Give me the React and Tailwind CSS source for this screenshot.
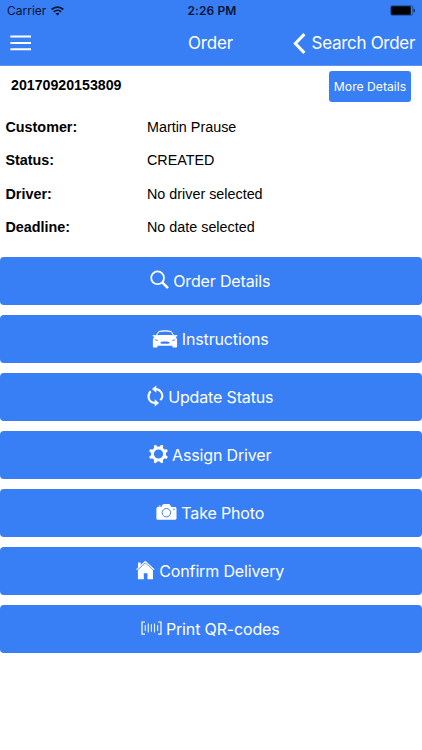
import React from 'react';

const SearchIcon = () => (
  <svg width="19" height="20" viewBox="0 0 19 20" className="shrink-0 -mt-0.5" fill="none" stroke="#fff">
    <circle cx="7.6" cy="7.8" r="6.4" strokeWidth="1.8" />
    <path d="M12.2 12.4 L18 18.1" strokeWidth="2.6" />
  </svg>
);

const CarIcon = () => (
  <svg width="26" height="20" viewBox="0 0 26 20" className="shrink-0 -mt-px" fill="#fff">
    <path fillRule="evenodd" d="M7 2 C10 .9 16 .9 19 2 C20.3 3.1 21.3 4.9 22 6.3 L25.3 5.9 L25.2 7.2 L23.6 7.8 C24.8 8.9 25.2 10.4 25.1 12 V17.6 C25.1 18.3 24.8 18.6 24.2 18.6 H21.3 C20.7 18.6 20.4 18.3 20.4 17.6 V16.8 H5.6 V17.6 C5.6 18.3 5.3 18.6 4.7 18.6 H1.8 C1.2 18.6 .9 18.3 .9 17.6 V12 C.8 10.4 1.2 8.9 2.4 7.8 L.8 7.2 L.7 5.9 L4 6.3 C4.7 4.9 5.7 3.1 7 2 Z M7.3 3 C6.4 3.9 5.7 5.1 5.2 6.3 C10 5.8 16 5.8 20.8 6.3 C20.3 5.1 19.6 3.9 18.7 3 C15.5 2.2 10.5 2.2 7.3 3 Z M2.5 10.3 C3.2 11.7 4.5 12 6 11.9 C5.4 11 4.1 10.5 2.5 10.3 Z M23.5 10.3 C22.8 11.7 21.5 12 20 11.9 C20.6 11 21.9 10.5 23.5 10.3 Z M9 12.9 C7.8 13.4 8.4 14.7 10 14.7 H16 C17.6 14.7 18.2 13.4 17 12.9 C15 12.5 11 12.5 9 12.9 Z" />
  </svg>
);

const LoopIcon = () => (
  <svg width="17" height="22" viewBox="0 0 17 22" className="shrink-0 -mt-0.5" fill="none" stroke="#fff" strokeWidth="2.1">
    <path d="M8 4.1 C13 4 16.5 8.5 14.9 13 L13.4 15.2" />
    <path d="M3.7 6.3 C.3 9.8 .9 15 5 17.3 C6.2 17.8 7.3 18 9 17.9" />
    <path d="M9.3 .5 V7.8 L4.9 4.1 Z M7.7 14.2 V21.5 L12.1 17.9 Z" fill="#fff" stroke="none" />
  </svg>
);

const GearIcon = () => (
  <svg width="19" height="20" viewBox="0 0 19 20" className="shrink-0 -mt-0.5" fill="none" stroke="#fff">
    <circle cx="9.5" cy="10" r="6" strokeWidth="2.8" />
    <g fill="#fff" stroke="none">
      {[22.5, 67.5, 112.5, 157.5, 202.5, 247.5, 292.5, 337.5].map((a) => (
        <path key={a} d="M7.4 4 L8.4 .4 H10.6 L11.6 4 Z" transform={`rotate(${a} 9.5 10)`} />
      ))}
    </g>
  </svg>
);

const CameraIcon = () => (
  <svg width="21" height="18" viewBox="0 0 21 18" className="shrink-0 -mt-0.5">
    <path d="M2 4 H4.8 C6.2 3.7 6 1.2 7.8 1 H12.8 C14.6 1.2 14.4 3.7 15.8 4 H18.8 C19.8 4 20.5 4.7 20.5 5.7 V15.2 C20.5 16.2 19.8 16.8 18.8 16.8 H2 C1 16.8 .4 16.2 .4 15.2 V5.7 C.4 4.7 1 4 2 4 Z" fill="#fff" />
    <path d="M2.6 2.6 H4.6 V3.6 H2.6 Z" fill="#fff" />
    <circle cx="10.4" cy="9.7" r="4.2" fill="none" stroke="#387ef5" strokeWidth="1" />
    <circle cx="18" cy="6.2" r=".8" fill="#387ef5" />
  </svg>
);

const HomeIcon = () => (
  <svg width="19" height="20" viewBox="0 0 19 20" className="shrink-0 -mt-0.5" fill="#fff">
    <path d="M9.3 .8 L18.6 9.3 L17.8 10.1 L9.3 2.4 L.9 10.1 L.1 9.3 L2 7.6 V2.5 H4.7 V5 Z" />
    <path d="M9.3 3.3 L17 10.1 V19.2 H11.5 V13.2 H7.8 V19.2 H1.9 V10.1 Z" />
  </svg>
);

const BarcodeIcon = () => (
  <svg width="21" height="16" viewBox="0 0 21 16" className="shrink-0 -mt-0.5" fill="none" stroke="#fff" strokeWidth="1.2">
    <path d="M4 2 H1 V14.2 H4 M17 2 H20 V14.2 H17" />
    <path d="M4.3 5 V11 M7.3 3.5 V12.5 M10.4 4.3 V11.7 M13.5 3.5 V12.5 M16.6 5 V11" opacity=".85" />
  </svg>
);

const DETAILS = [
  ['Customer:', 'Martin Prause'],
  ['Status:', 'CREATED'],
  ['Driver:', 'No driver selected'],
  ['Deadline:', 'No date selected'],
];

const ACTIONS = [
  { icon: SearchIcon, label: 'Order Details' },
  { icon: CarIcon, label: 'Instructions' },
  { icon: LoopIcon, label: 'Update Status' },
  { icon: GearIcon, label: 'Assign Driver' },
  { icon: CameraIcon, label: 'Take Photo' },
  { icon: HomeIcon, label: 'Confirm Delivery' },
  { icon: BarcodeIcon, label: 'Print QR-codes' },
];

function StatusBar() {
  return (
    <div className="grid h-[21px] grid-cols-3 items-center pt-px pr-[7px] pl-[7px] text-[12px] text-[#071536]">
      <div className="flex items-center gap-[5px]">
        <span>Carrier</span>
        <svg width="13" height="10" viewBox="0 0 13 10" className="-mt-px" fill="none" stroke="#071536" strokeWidth="1.8">
          <path d="M.7 3.5 C4 .2 9 .2 12.3 3.5 M2.9 5.8 C5 3.8 8 3.8 10.1 5.8" />
          <path d="M4.5 7.4 C5.8 6.4 7.2 6.4 8.5 7.4 L6.5 9.5 Z" fill="#071536" stroke="none" />
        </svg>
      </div>
      <span className="pl-[2px] text-center font-semibold tracking-[0.1px]">2:26 PM</span>
      <svg width="25" height="11" viewBox="0 0 25 11" className="-mt-px justify-self-end">
        <rect x=".8" y=".8" width="22" height="9.4" rx="1.6" fill="none" stroke="#16386f" strokeWidth=".7" />
        <rect x="1.2" y="1.2" width="19.6" height="8.6" rx=".8" fill="#000" />
        <path d="M23.7 3.8 V7.2 L24.8 6.4 V4.6 Z" fill="#071536" />
      </svg>
    </div>
  );
}

function NavBar() {
  return (
    <div className="grid h-[45px] grid-cols-3 items-center pt-px pr-[7px] pl-[7px] text-[17px] tracking-[-0.3px] text-white">
      <svg width="28" height="18" viewBox="0 0 28 18" className="-mt-[3px]" stroke="#fff" strokeWidth="2">
        <path d="M3.4 2.5 H24 M3.4 9 H24 M3.4 15.3 H24" />
      </svg>
      <h1 className="pr-px text-center tracking-[-0.15px]">Order</h1>
      <button className="flex items-center gap-[6px] justify-self-end whitespace-nowrap">
        <svg width="13" height="21" viewBox="0 0 13 21" className="-mt-px" fill="none" stroke="#fff" strokeWidth="3.1">
          <path d="M11.4 1.2 L2.4 10.5 L11.4 19.8" />
        </svg>
        Search Order
      </button>
    </div>
  );
}

export default function App() {
  return (
    <div className="h-[750px] w-[422px] overflow-hidden bg-white font-['Inter',sans-serif]">
      <header className="h-[66px] border-b border-[#5b94f0] bg-[#387ef5]">
        <StatusBar />
        <NavBar />
      </header>

      <section className="h-[191px] font-['Liberation_Sans',Arial,sans-serif] text-[14.35px] text-black">
        <div className="flex h-[45px] items-start justify-between pr-[11px] pl-[11px]">
          <span className="pt-[9px] text-[14.2px] font-bold">20170920153809</span>
          <button className="mt-[5px] h-[31px] w-[82px] rounded-[3px] bg-[#387ef5] pt-px font-['Inter',sans-serif] text-[12.2px] whitespace-nowrap text-white">
            More Details
          </button>
        </div>
        <dl>
          {DETAILS.map(([name, value]) => (
            <div key={name} className="flex h-[33.4px] items-center pl-[5.5px]">
              <dt className="w-[141.5px] font-bold">{name}</dt>
              <dd>{value}</dd>
            </div>
          ))}
        </dl>
      </section>

      <main className="flex flex-col gap-2.5">
        {ACTIONS.map(({ icon: Icon, label }) => (
          <button
            key={label}
            className="flex h-12 w-full items-center justify-center gap-1 rounded bg-[#387ef5] pr-[1.5px] text-[16px] tracking-[-0.15px] text-white"
          >
            <Icon />
            <span className="-mt-px">{label}</span>
          </button>
        ))}
      </main>
    </div>
  );
}
